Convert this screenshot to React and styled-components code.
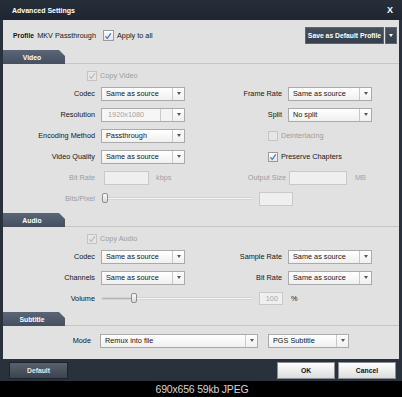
import styled, { createGlobalStyle } from "styled-components";

const font = `"Liberation Sans", Arial, sans-serif`;

const GlobalStyle = createGlobalStyle`
  html, body {
    margin: 0;
    padding: 0;
    background: #000;
  }
  * {
    box-sizing: border-box;
  }
`;

const Page = styled.div`
  width: 402px;
  height: 397px;
  background: #000;
  font-family: ${font};
  font-size: 7.3px;
  color: #151515;
  display: flex;
  flex-direction: column;
`;

const Window = styled.div`
  height: 381px;
  background: #29313d;
  display: flex;
  flex-direction: column;
`;

const TitleBar = styled.div`
  height: 20px;
  background: linear-gradient(#262e3a, #1f2631);
  display: flex;
  align-items: center;
  justify-content: space-between;
  padding: 0 9px 0 12px;
  color: #fff;
  font-weight: bold;
  font-size: 7px;
`;

const Close = styled.span`
  font-size: 9px;
  font-weight: bold;
`;

const Body = styled.div`
  height: 339px;
  margin: 0 3px 0 3px;
  background: #e1e1e1;
  display: flex;
  flex-direction: column;
`;

const ProfileBar = styled.div`
  display: flex;
  align-items: center;
  padding: 7px 2px 0 10px;
  height: 30px;
  align-items: flex-start;
`;

const ProfileInfo = styled.div`
  display: flex;
  align-items: center;
  height: 17px;
  gap: 3px;
  flex: 1;
`;

const Bold = styled.span`
  font-weight: bold;
  font-size: 6.8px;
`;

const SplitButton = styled.div`
  display: flex;
  height: 17px;
  gap: 1px;
`;

const DarkButton = styled.button`
  font-family: ${font};
  font-weight: bold;
  font-size: 6.8px;
  color: #fff;
  background: linear-gradient(#46505d, #353e4a);
  border: 1px solid #5d6672;
  padding: 0;
  width: ${(p) => p.$w}px;
  height: 100%;
  display: flex;
  align-items: center;
  justify-content: center;
`;

const SectionHead = styled.div`
  display: flex;
  height: 14px;
  border-bottom: 1px solid #c6c6c6;
`;

const Tab = styled.div`
  position: relative;
  width: 62px;
  height: 14px;
  background: linear-gradient(#5a6577, #454f60);
  color: #fff;
  font-weight: bold;
  font-size: 6.8px;
  display: flex;
  align-items: center;
  justify-content: center;
  padding-right: 4px;
  clip-path: polygon(0 0, 56px 0, 62px 6px, 62px 14px, 0 14px);

  &::after {
    content: "";
    position: absolute;
    top: 0;
    right: 0;
    border-style: solid;
    border-width: 0 6px 6px 0;
    border-color: transparent #1c222b transparent transparent;
    transform: rotate(180deg);
    transform-origin: 75% 25%;
  }
`;

const SectionBody = styled.div`
  padding: ${(p) => p.$pt || 4}px 0 ${(p) => p.$pb || 0}px 0;
  display: flex;
  flex-direction: column;
`;

const Row = styled.div`
  display: grid;
  grid-template-columns: 92px 94px 81px 1fr;
  column-gap: 6px;
  align-items: center;
  height: ${(p) => p.$h || 21}px;
`;

const Label = styled.span`
  text-align: right;
  white-space: nowrap;
  color: ${(p) => (p.$dim ? "#9d9d9d" : "#151515")};
  margin-right: ${(p) => p.$shift || 0}px;
  padding-right: ${(p) => p.$pad || 0}px;
`;

const CheckField = styled.label`
  grid-column: ${(p) => p.$col};
  padding-left: ${(p) => p.$indent}px;
  display: flex;
  align-items: center;
  gap: 3px;
  white-space: nowrap;
  color: ${(p) => (p.$dim ? "#9d9d9d" : "#151515")};
`;

const Box = styled.span`
  width: ${(p) => p.$size || 10}px;
  height: ${(p) => p.$size || 10}px;
  border: 1px solid ${(p) => (p.$dim ? "#c4c4c4" : "#9a9a9a")};
  background: ${(p) => (p.$dim ? "#e6e6e6" : "linear-gradient(#ffffff, #e4e4e4)")};
  display: flex;
  align-items: center;
  justify-content: center;
  flex-shrink: 0;
`;

const SelectBox = styled.div`
  width: ${(p) => p.$w || 84}px;
  height: 14px;
  border: 1px solid #aaaaaa;
  background: linear-gradient(#ffffff, #f0f0f0);
  display: flex;
  align-items: stretch;
  margin-left: ${(p) => p.$ml || 0}px;
`;

const SelectText = styled.span`
  flex: 1;
  display: flex;
  align-items: center;
  padding-left: 4px;
  color: ${(p) => (p.$dim ? "#a3a3a3" : "#151515")};
  background: ${(p) => (p.$dim ? "#f6f6f6" : "transparent")};
  white-space: nowrap;
  overflow: hidden;
`;

const Segment = styled.span`
  width: 12px;
  border-left: 1px solid #c8c8c8;
  background: ${(p) => (p.$blank ? "#f3f3f3" : "transparent")};
  display: flex;
  align-items: center;
  justify-content: center;
`;

const Arrow = styled.span`
  width: 0;
  height: 0;
  border-left: 2.5px solid transparent;
  border-right: 2.5px solid transparent;
  border-top: 3px solid ${(p) => p.$color || "#4b5a6e"};
`;

const Inline = styled.div`
  grid-column: ${(p) => p.$col};
  display: flex;
  align-items: center;
  gap: ${(p) => p.$gap || 0}px;
  margin-left: ${(p) => p.$ml || 0}px;
`;

const TextInput = styled.div`
  width: ${(p) => p.$w}px;
  height: ${(p) => p.$h || 14}px;
  border: 1px solid #c9c9c9;
  background: #efefef;
  color: #a6a6a6;
  display: flex;
  align-items: center;
  justify-content: flex-end;
  padding-right: 4px;
  flex-shrink: 0;
`;

const Unit = styled.span`
  color: ${(p) => (p.$dim ? "#a3a3a3" : "#151515")};
  margin-left: ${(p) => p.$ml || 0}px;
`;

const Slider = styled.div`
  position: relative;
  width: 152px;
  height: 3px;
  border-radius: 2px;
  background: #f7f7f7;
  border: 1px solid #d2d2d2;
`;

const SliderFill = styled.div`
  height: 100%;
  background: #b3b3b3;
  border-radius: 2px;
`;

const Thumb = styled.div`
  position: absolute;
  top: -5px;
  width: 6px;
  height: 10px;
  border-radius: 2px;
  border: 1px solid #8f8f8f;
  background: linear-gradient(#fafafa, #d8d8d8);
`;

const Spacer = styled.div`
  flex: 1;
`;

const Footer = styled.div`
  height: 22px;
  display: flex;
  align-items: flex-start;
  padding: 3px 6px 0 9px;
  gap: 3px;
`;

const FooterButton = styled.button`
  font-family: ${font};
  font-weight: bold;
  font-size: 6.8px;
  width: 58px;
  height: 17px;
  padding: 0;
  color: ${(p) => (p.$light ? "#111" : "#e9e9e9")};
  background: ${(p) =>
    p.$light
      ? "linear-gradient(#ffffff, #dcdcdc)"
      : "linear-gradient(#59616c, #3b434e)"};
  border: 1px solid ${(p) => (p.$light ? "#8b8f95" : "#1d232b")};
`;

const Caption = styled.div`
  flex: 1;
  display: flex;
  align-items: center;
  justify-content: center;
  color: #d6d6d6;
  font-size: 10.5px;
  letter-spacing: -0.2px;
  padding-left: 2px;
`;

function Check({ checked, dim, size }) {
  return (
    <Box $dim={dim} $size={size}>
      {checked && (
        <svg width="8" height="8" viewBox="0 0 10 10">
          <path
            d="M1.8 5.4 L4.1 8 L8.6 1.8"
            fill="none"
            stroke={dim ? "#b9b9b9" : "#3e73b6"}
            strokeWidth="1.5"
          />
        </svg>
      )}
    </Box>
  );
}

function Select({ value, width, ml }) {
  return (
    <SelectBox $w={width} $ml={ml}>
      <SelectText>{value}</SelectText>
      <Segment>
        <Arrow />
      </Segment>
    </SelectBox>
  );
}

function Section({ title, children, pb }) {
  return (
    <>
      <SectionHead>
        <Tab>{title}</Tab>
      </SectionHead>
      <SectionBody $pb={pb}>{children}</SectionBody>
    </>
  );
}

function RangeInput({ value, width, children }) {
  return (
    <Inline $col="2 / 5" $gap={6}>
      <Slider>
        <SliderFill style={{ width: `${value}%` }} />
        <Thumb style={{ left: `${value}%`, marginLeft: value ? -3 : 0 }} />
      </Slider>
      {children}
    </Inline>
  );
}

export default function App() {
  return (
    <Page>
      <GlobalStyle />
      <Window>
        <TitleBar>
          <span>Advanced Settings</span>
          <Close>X</Close>
        </TitleBar>
        <Body>
          <ProfileBar>
            <ProfileInfo>
              <Bold>Profile</Bold>
              <span>MKV Passthrough</span>
              <span style={{ width: 1 }} />
              <Check checked size={11} />
              <span>Apply to all</span>
            </ProfileInfo>
            <SplitButton>
              <DarkButton $w={79}>Save as Default Profile</DarkButton>
              <DarkButton $w={12}>
                <Arrow $color="#ffffff" />
              </DarkButton>
            </SplitButton>
          </ProfileBar>

          <Section title="Video">
            <Row $h={15}>
              <CheckField $col="1 / 3" $indent={84} $dim>
                <Check checked dim />
                Copy Video
              </CheckField>
            </Row>
            <Row>
              <Label>Codec</Label>
              <Select value="Same as source" />
              <Label>Frame Rate</Label>
              <Select value="Same as source" />
            </Row>
            <Row>
              <Label>Resolution</Label>
              <SelectBox>
                <SelectText $dim>&nbsp;1920x1080</SelectText>
                <Segment $blank />
                <Segment>
                  <Arrow />
                </Segment>
              </SelectBox>
              <Label>Split</Label>
              <Select value="No split" />
            </Row>
            <Row>
              <Label>Encoding Method</Label>
              <Select value="Passthrough" />
              <CheckField $col="3 / 5" $indent={67} $dim>
                <Check dim />
                Deinterlacing
              </CheckField>
            </Row>
            <Row>
              <Label>Video Quality</Label>
              <Select value="Same as source" />
              <CheckField $col="3 / 5" $indent={67}>
                <Check checked />
                Preserve Chapters
              </CheckField>
            </Row>
            <Row>
              <Label $dim>Bit Rate</Label>
              <Inline $col="2" $ml={3}>
                <TextInput $w={45} />
                <Unit $dim $ml={7}>
                  kbps
                </Unit>
              </Inline>
              <Label $dim $shift={-4}>
                Output Size
              </Label>
              <Inline $col="4" $ml={1}>
                <TextInput $w={58} />
                <Unit $dim $ml={8}>
                  MB
                </Unit>
              </Inline>
            </Row>
            <Row>
              <Label $dim>Bits/Pixel</Label>
              <RangeInput value={0}>
                <TextInput $w={34} $h={14} />
              </RangeInput>
            </Row>
          </Section>

          <Spacer style={{ flex: "0 0 4px" }} />

          <Section title="Audio">
            <Row $h={15}>
              <CheckField $col="1 / 3" $indent={84} $dim>
                <Check checked dim />
                Copy Audio
              </CheckField>
            </Row>
            <Row>
              <Label>Codec</Label>
              <Select value="Same as source" />
              <Label>Sample Rate</Label>
              <Select value="Same as source" />
            </Row>
            <Row>
              <Label>Channels</Label>
              <Select value="Same as source" />
              <Label>Bit Rate</Label>
              <Select value="Same as source" />
            </Row>
            <Row>
              <Label>Volume</Label>
              <RangeInput value={21}>
                <TextInput $w={24} $h={13}>
                  100
                </TextInput>
                <Unit $ml={2}>%</Unit>
              </RangeInput>
            </Row>
          </Section>

          <Spacer style={{ flex: "0 0 3px" }} />

          <Section title="Subtitle">
            <Row>
              <Label $pad={4}>Mode</Label>
              <Inline $col="2 / 5" $gap={10} $ml={-1}>
                <Select value="Remux into file" width={158} />
                <Select value="PGS Subtitle" width={81} />
              </Inline>
            </Row>
          </Section>
        </Body>
        <Footer>
          <FooterButton style={{ width: 59 }}>Default</FooterButton>
          <Spacer />
          <FooterButton $light>OK</FooterButton>
          <FooterButton $light>Cancel</FooterButton>
        </Footer>
      </Window>
      <Caption>690x656 59kb JPEG</Caption>
    </Page>
  );
}
